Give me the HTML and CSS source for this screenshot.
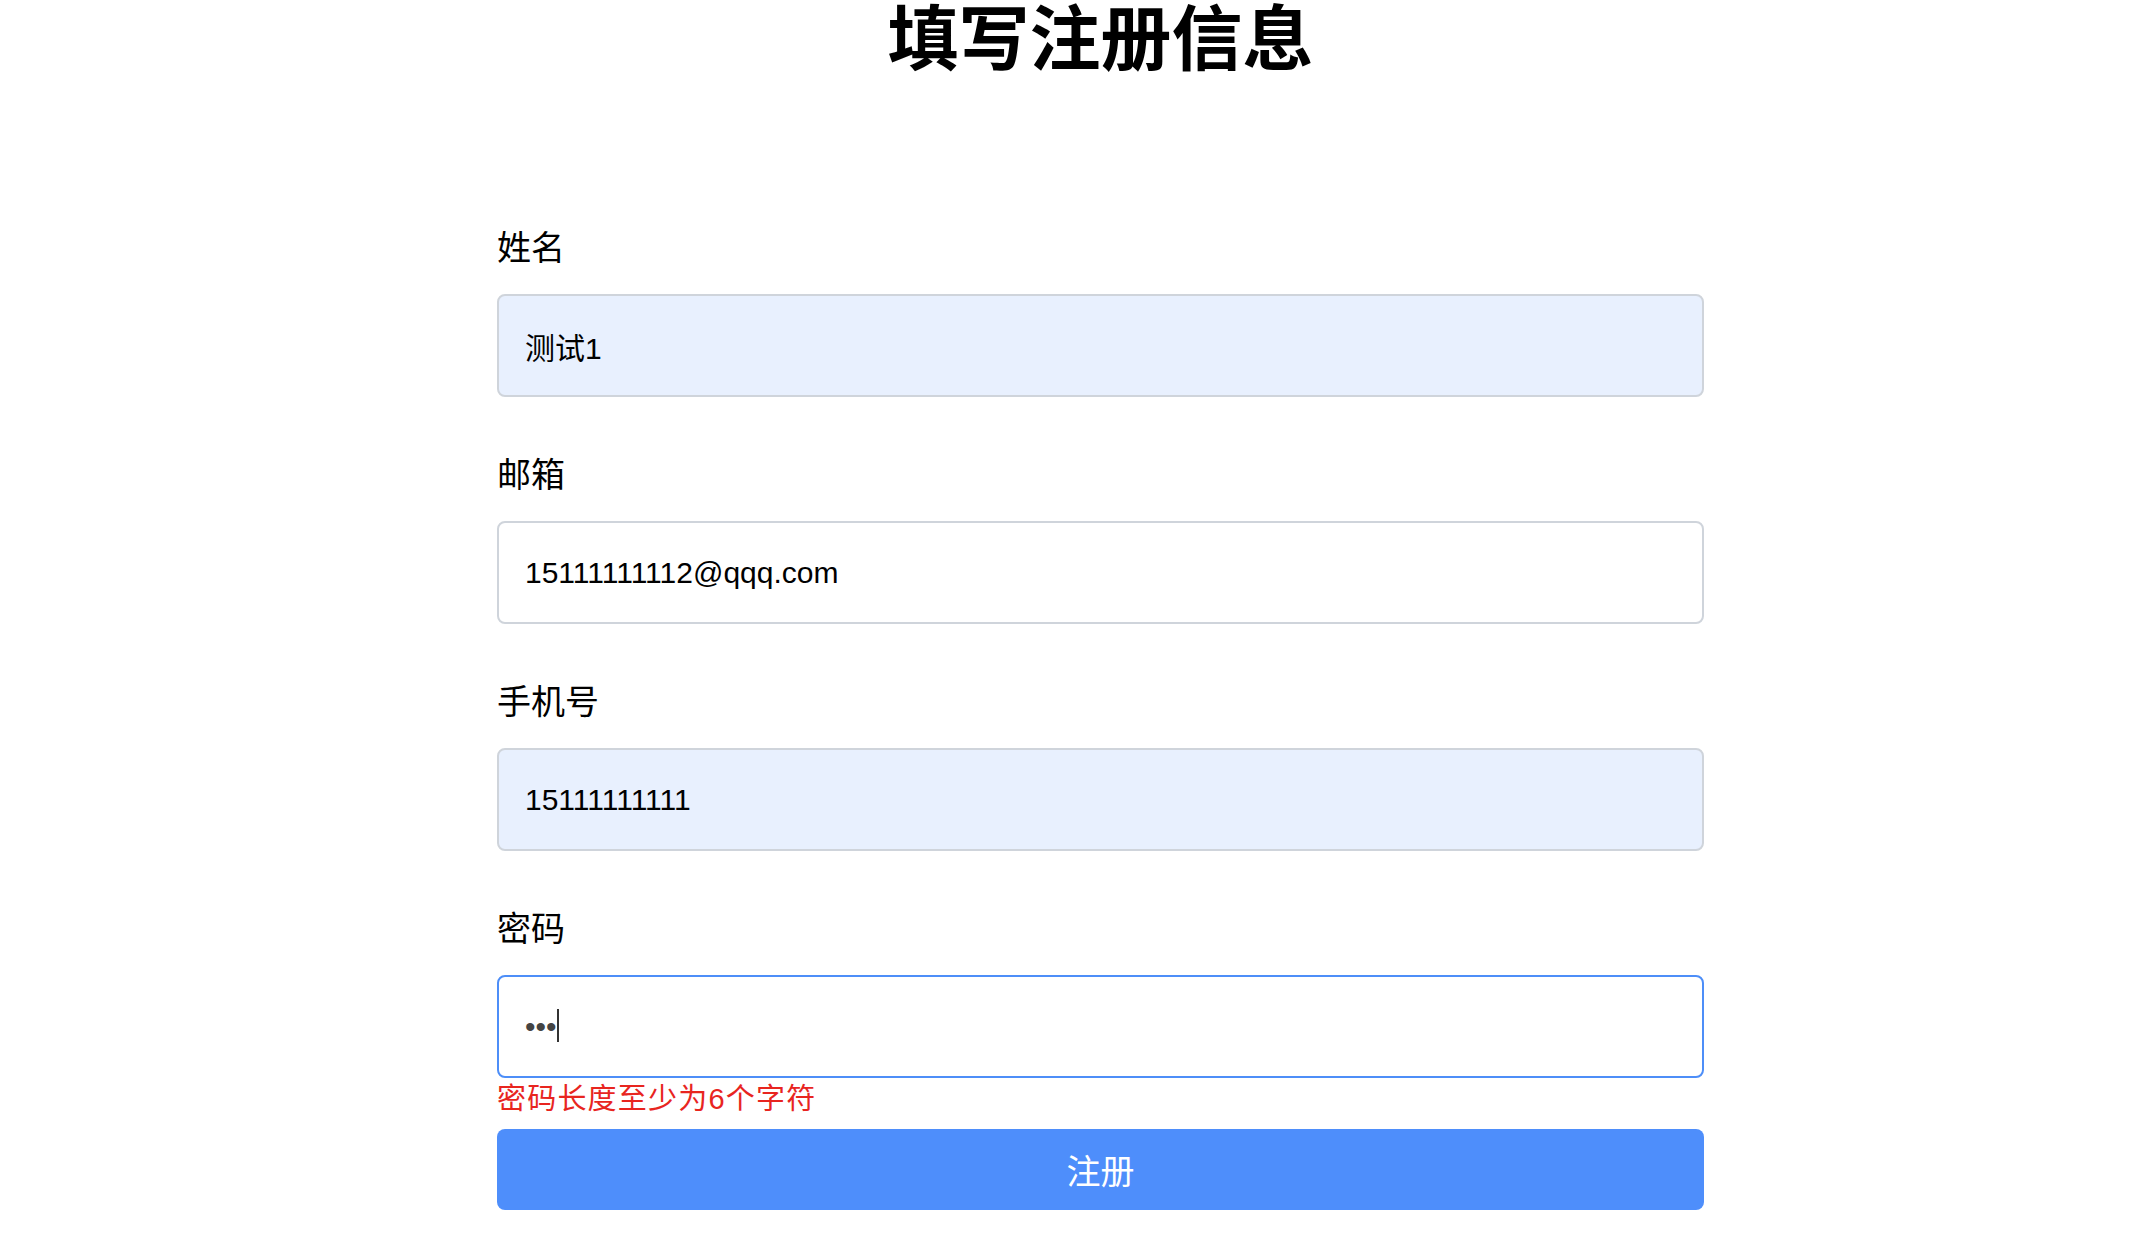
FILE: index.html
```html
<!DOCTYPE html>
<html lang="zh-CN">
<head>
<meta charset="utf-8">
<title>填写注册信息</title>
<link rel="stylesheet" href="styles.css">
</head>
<body>
<main class="page">
  <h1 class="title">填写注册信息</h1>
  <form class="form">
    <div class="field">
      <label class="label" for="name">姓名</label>
      <input class="input autofilled" id="name" type="text" value="测试1">
    </div>
    <div class="field">
      <label class="label" for="email">邮箱</label>
      <input class="input" id="email" type="text" value="15111111112@qqq.com">
    </div>
    <div class="field">
      <label class="label" for="phone">手机号</label>
      <input class="input autofilled" id="phone" type="text" value="15111111111">
    </div>
    <div class="field field-last">
      <label class="label" for="pwd">密码</label>
      <div class="input-wrap">
        <input class="input focused" id="pwd" type="password" value="123">
        <span class="caret"></span>
      </div>
      <div class="error">密码长度至少为6个字符</div>
    </div>
    <button class="submit" type="button">注册</button>
  </form>
</main>
</body>
</html>
```

FILE: styles.css
```css
html, body {
  background: #ffffff;
}

body {
  margin: 0;
  padding-left: 64px;
  display: flex;
  justify-content: center;
  font-family: "Liberation Sans", "Noto Sans CJK SC", sans-serif;
  color: #000;
}

.page {
  width: 1207px;
}

.title {
  margin: 4px 0 0 0;
  font-size: 71px;
  line-height: 72px;
  font-weight: 700;
  text-align: center;
  color: #000;
}

.form {
  margin-top: 148px;
  display: flex;
  flex-direction: column;
}

.field {
  display: flex;
  flex-direction: column;
  margin-bottom: 54px;
}

.field-last {
  margin-bottom: 0;
}

.label {
  font-size: 34px;
  line-height: 48px;
  margin-bottom: 22px;
  color: #000;
}

.input-wrap {
  position: relative;
  display: flex;
}

.input {
  width: 100%;
  height: 103px;
  box-sizing: border-box;
  border: 2px solid #cfd4db;
  border-radius: 8px;
  padding: 0 26px;
  font-family: "Liberation Sans", "Noto Sans CJK SC", sans-serif;
  font-size: 30px;
  color: #000;
  background: #ffffff;
  outline: none;
}

.autofilled {
  background: #e8f0fe;
}

.focused {
  border-color: #4d8ef8;
  caret-color: transparent;
  color: #444;
}

.caret {
  position: absolute;
  left: 60px;
  top: 34px;
  width: 2px;
  height: 33px;
  background: #333;
}

.error {
  margin-top: 3px;
  font-size: 29px;
  line-height: 36px;
  letter-spacing: 1.2px;
  color: #e8251f;
}

.submit {
  margin-top: 12px;
  height: 81px;
  border: none;
  border-radius: 8px;
  background: #4e8efb;
  color: #ffffff;
  font-family: "Liberation Sans", "Noto Sans CJK SC", sans-serif;
  font-size: 34px;
  cursor: pointer;
}
```
